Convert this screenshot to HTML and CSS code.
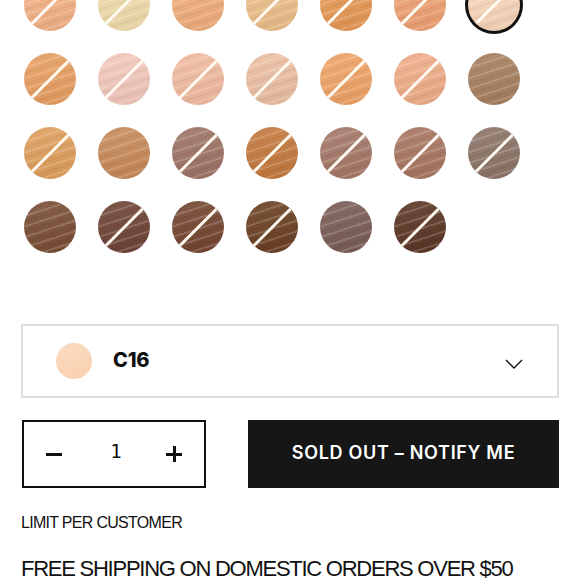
FILE: index.html
```html
<!DOCTYPE html>
<html>
<head>
<meta charset="utf-8">
<link rel="stylesheet" href="styles.css">
</head>
<body>
<div class="page">
  <div class="swatches">
    <span class="sw na" style="--c:#f4b184"></span>
    <span class="sw na" style="--c:#f1dcaa"></span>
    <span class="sw" style="--c:#f2ad7a"></span>
    <span class="sw na" style="--c:#edbe88"></span>
    <span class="sw na" style="--c:#e79853"></span>
    <span class="sw na" style="--c:#efa070"></span>
    <span class="sw na sel" style="--c:#f9d5b8"></span>

    <span class="sw na" style="--c:#e89e60"></span>
    <span class="sw na" style="--c:#f4c7bb"></span>
    <span class="sw na" style="--c:#f2ba9f"></span>
    <span class="sw na" style="--c:#ecbfa2"></span>
    <span class="sw na" style="--c:#efa264"></span>
    <span class="sw na" style="--c:#f0ac86"></span>
    <span class="sw" style="--c:#a67e5e"></span>

    <span class="sw na" style="--c:#df9e5a"></span>
    <span class="sw" style="--c:#c88957"></span>
    <span class="sw na" style="--c:#9d7264"></span>
    <span class="sw na" style="--c:#c4783c"></span>
    <span class="sw na" style="--c:#a47666"></span>
    <span class="sw na" style="--c:#a87560"></span>
    <span class="sw na" style="--c:#8c7366"></span>

    <span class="sw" style="--c:#794c33"></span>
    <span class="sw na" style="--c:#6d4233"></span>
    <span class="sw na" style="--c:#73442e"></span>
    <span class="sw na" style="--c:#6a3e21"></span>
    <span class="sw" style="--c:#795b54"></span>
    <span class="sw na" style="--c:#5a3422"></span>
  </div>

  <div class="select">
    <span class="sel-dot"></span>
    <span class="sel-name">C16</span>
    <svg class="chev" width="18" height="10" viewBox="0 0 18 10"><path d="M1 1 L9 9 L17 1" fill="none" stroke="#111" stroke-width="1.4"/></svg>
  </div>

  <div class="buy">
    <div class="qty">
      <span class="minus"></span>
      <span class="num">1</span>
      <span class="plus"></span>
    </div>
    <button class="notify">SOLD OUT – NOTIFY ME</button>
  </div>

  <p class="limit">LIMIT PER CUSTOMER</p>
  <p class="ship">FREE SHIPPING ON DOMESTIC ORDERS OVER $50</p>
</div>
</body>
</html>
```

FILE: styles.css
```css
html, body {
  margin: 0;
  padding: 0;
  background: #fff;
  overflow: hidden;
}
body {
  font-family: "Liberation Sans", Arial, sans-serif;
  color: #111;
}
.page {
  padding: 0 21px 0 21px;
}
.swatches {
  display: grid;
  grid-template-columns: repeat(7, 52px);
  grid-auto-rows: 52px;
  column-gap: 22px;
  row-gap: 22px;
  margin-top: -21px;
  padding-left: 3px;
}
.sw {
  position: relative;
  display: block;
  width: 52px;
  height: 52px;
  border-radius: 50%;
  overflow: hidden;
  background:
    repeating-linear-gradient(-18deg, rgba(255,255,255,0.16) 0 2px, rgba(255,255,255,0) 2px 5px, rgba(0,0,0,0.04) 5px 7px, rgba(255,255,255,0) 7px 10px),
    linear-gradient(170deg, rgba(255,255,255,0.12), rgba(0,0,0,0.06)),
    var(--c);
}
.sw.na::after {
  content: "";
  position: absolute;
  left: -4px;
  right: -4px;
  top: 50%;
  height: 3px;
  margin-top: -1.5px;
  background: #fffaf2;
  transform: rotate(-45deg);
}
.sw.sel {
  overflow: visible;
  box-shadow: 0 0 0 3px #111;
}
.sw.sel::after {
  left: 2px;
  right: 2px;
}
.select {
  margin-top: 71px;
  height: 70px;
  border: 2px solid #dedede;
  display: flex;
  align-items: center;
  padding: 0 34px 0 33px;
}
.sel-dot {
  width: 36px;
  height: 36px;
  border-radius: 50%;
  background: linear-gradient(160deg, #fbdcc2, #f8d0ae);
}
.sel-name {
  margin-left: 21px;
  font-family: "Inter", sans-serif;
  font-weight: 800;
  font-size: 20px;
  letter-spacing: -0.2px;
  margin-top: -3px;
}
.chev {
  margin-left: auto;
  margin-top: 6px;
}
.buy {
  display: flex;
  margin-top: 22px;
  height: 68px;
  gap: 43px;
}
.qty {
  box-sizing: border-box;
  width: 184px;
  border: 2px solid #111;
  margin-left: 1px;
  display: flex;
  align-items: center;
  justify-content: space-between;
  padding: 0 22px;
}
.minus, .plus {
  position: relative;
  width: 16px;
  height: 16px;
}
.minus::before, .plus::before, .plus::after {
  content: "";
  position: absolute;
  background: #111;
}
.minus::before, .plus::before {
  left: 0;
  right: 0;
  top: 7px;
  height: 3px;
}
.plus::after {
  top: 0;
  bottom: 0;
  left: 7px;
  width: 3px;
}
.num {
  font-family: "DejaVu Sans Mono", monospace;
  font-size: 19px;
  margin-top: -6px;
  margin-left: 4px;
}
.notify {
  flex: 1;
  border: none;
  background: #171617;
  color: #fff;
  font-family: "Inter", sans-serif;
  font-weight: 600;
  font-size: 18px;
  letter-spacing: 0.7px;
  padding: 0;
  margin-left: -1px;
  padding-bottom: 3px;
}
.limit {
  margin: 26px 0 0 0;
  font-size: 16px;
  letter-spacing: -0.7px;
  line-height: 18px;
}
.ship {
  margin: 24px 0 0 0;
  font-size: 22px;
  letter-spacing: -1.25px;
  line-height: 26px;
}
```
